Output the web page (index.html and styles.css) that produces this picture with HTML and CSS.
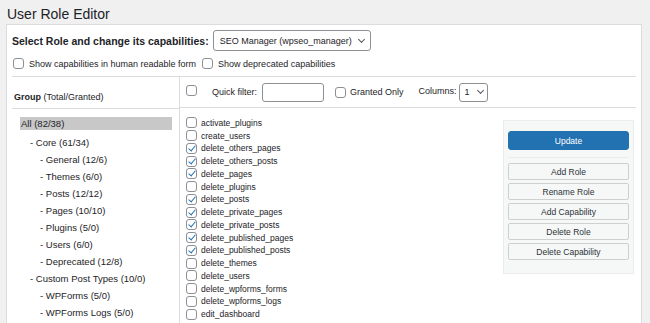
FILE: index.html
```html
<!DOCTYPE html>
<html lang="en">
<head>
    <meta charset="UTF-8">
    <meta name="viewport" content="width=device-width, initial-scale=1.0">
    <title>User Role Editor</title>
    <link rel="stylesheet" href="styles.css">
</head>
<body>
    <h1 class="page-title">User Role Editor</h1>

    <div class="panel">
        <div class="role-row">
            <strong>Select Role and change its capabilities:</strong>
            <div class="select role-select">SEO Manager (wpseo_manager) <span class="chevron"></span></div>
        </div>

        <div class="options-row">
            <label class="opt"><span class="cb"></span>Show capabilities in human readable form</label>
            <label class="opt"><span class="cb"></span>Show deprecated capabilities</label>
        </div>

        <div class="editor">
            <div class="groups">
                <div class="groups-head"><b>Group</b> (Total/Granted)</div>
                <ul class="group-list">
                    <li class="lvl0"><span class="current">All (82/38)</span></li>
                    <li class="lvl1">- Core (61/34)</li>
                    <li class="lvl2">- General (12/6)</li>
                    <li class="lvl2">- Themes (6/0)</li>
                    <li class="lvl2">- Posts (12/12)</li>
                    <li class="lvl2">- Pages (10/10)</li>
                    <li class="lvl2">- Plugins (5/0)</li>
                    <li class="lvl2">- Users (6/0)</li>
                    <li class="lvl2">- Deprecated (12/8)</li>
                    <li class="lvl1">- Custom Post Types (10/0)</li>
                    <li class="lvl2">- WPForms (5/0)</li>
                    <li class="lvl2">- WPForms Logs (5/0)</li>
                </ul>
            </div>

            <div class="caps">
                <div class="caps-toolbar">
                    <span class="cb cb-all"></span>
                    <span class="filter-label">Quick filter:</span>
                    <span class="input"></span>
                    <label class="opt granted"><span class="cb"></span>Granted Only</label>
                    <span class="columns-label">Columns:</span>
                    <div class="select col-select">1 <span class="chevron"></span></div>
                </div>

                <div class="caps-body">
                    <ul class="cap-list">
                        <li><span class="cb"></span>activate_plugins</li>
                        <li><span class="cb"></span>create_users</li>
                        <li><span class="cb checked"></span>delete_others_pages</li>
                        <li><span class="cb checked"></span>delete_others_posts</li>
                        <li><span class="cb checked"></span>delete_pages</li>
                        <li><span class="cb"></span>delete_plugins</li>
                        <li><span class="cb checked"></span>delete_posts</li>
                        <li><span class="cb checked"></span>delete_private_pages</li>
                        <li><span class="cb checked"></span>delete_private_posts</li>
                        <li><span class="cb checked"></span>delete_published_pages</li>
                        <li><span class="cb checked"></span>delete_published_posts</li>
                        <li><span class="cb"></span>delete_themes</li>
                        <li><span class="cb"></span>delete_users</li>
                        <li><span class="cb"></span>delete_wpforms_forms</li>
                        <li><span class="cb"></span>delete_wpforms_logs</li>
                        <li><span class="cb"></span>edit_dashboard</li>
                    </ul>

                    <div class="sidebar">
                        <button class="btn btn-primary">Update</button>
                        <div class="btn-group">
                            <button class="btn">Add Role</button>
                            <button class="btn">Rename Role</button>
                            <button class="btn">Add Capability</button>
                            <button class="btn">Delete Role</button>
                            <button class="btn">Delete Capability</button>
                        </div>
                    </div>
                </div>
            </div>
        </div>
    </div>
</body>
</html>
```

FILE: styles.css
```css
* {
    margin: 0;
    padding: 0;
    box-sizing: border-box;
}

body {
    background-color: #f0f0f1;
    color: #1d2327;
    font-family: 'Liberation Sans', Arial, sans-serif;
    font-size: 9px;
    overflow: hidden;
}

.page-title {
    font-size: 14px;
    font-weight: 400;
    line-height: 18px;
    padding: 5px 0 0 7px;
    height: 24px;
}

.panel {
    margin-left: 6px;
    width: 636px;
    height: 320px;
    background-color: white;
    border: 1px solid #dcdcde;
    padding: 0 5px;
}

/* role selector */
.role-row {
    display: flex;
    align-items: center;
    gap: 4px;
    height: 21px;
    margin-top: 5px;
}

.role-row strong {
    font-size: 10.5px;
}

.select {
    display: flex;
    align-items: center;
    height: 21px;
    border: 1px solid #8c8f94;
    border-radius: 3px;
    font-size: 9px;
    white-space: nowrap;
    padding: 0 6px;
    gap: 4px;
}

.role-select {
    width: 158px;
}

.chevron {
    flex: none;
    width: 5px;
    height: 5px;
    border-right: 1px solid #50575e;
    border-bottom: 1px solid #50575e;
    transform: rotate(45deg);
    margin-top: -3px;
    margin-left: auto;
}

.options-row {
    display: flex;
    align-items: center;
    gap: 6px;
    height: 26px;
    padding-left: 1px;
    border-bottom: 1px solid #dcdcde;
}

.opt {
    display: flex;
    align-items: center;
    gap: 5px;
}

.cb {
    display: inline-block;
    flex: none;
    position: relative;
    width: 11px;
    height: 11px;
    border: 1px solid #8c8f94;
    border-radius: 3px;
    background-color: white;
}

.cb.checked::after {
    content: '';
    position: absolute;
    left: 3px;
    top: 0px;
    width: 3px;
    height: 6px;
    border-right: 1.5px solid #2271b1;
    border-bottom: 1.5px solid #2271b1;
    transform: rotate(40deg);
}

/* editor */
.editor {
    display: grid;
    grid-template-columns: 168px 1fr;
    height: 260px;
}

.groups {
    border-right: 1px solid #dcdcde;
}

.groups-head {
    height: 32px;
    padding: 15px 0 0 2px;
    border-bottom: 1px solid #dcdcde;
}

.group-list {
    list-style: none;
    padding-top: 6px;
    font-size: 9.5px;
}

.group-list li {
    height: 17px;
    line-height: 17px;
}

.lvl0 {
    padding-left: 8px;
}

.lvl1 {
    padding-left: 18px;
}

.lvl2 {
    padding-left: 28px;
}

.current {
    display: block;
    width: 152px;
    margin-top: 2px;
    line-height: 13px;
    padding-left: 1px;
    background-color: #c8c8c8;
}

.caps-toolbar {
    display: flex;
    align-items: center;
    height: 31px;
    padding-left: 6px;
    border-bottom: 1px solid #dcdcde;
}

.cb-all {
    align-self: flex-start;
    margin-top: 8px;
}

.filter-label {
    margin-left: 15px;
}

.input {
    width: 62px;
    height: 19px;
    border: 1px solid #8c8f94;
    border-radius: 3px;
    margin-left: 5px;
}

.granted {
    margin-left: 11px;
    gap: 4px;
}

.columns-label {
    margin-left: 15px;
    margin-top: -2px;
}

.col-select {
    width: 29px;
    height: 19px;
    margin-left: 2px;
    padding: 0 4px 0 5px;
    gap: 3px;
}

.caps-body {
    display: flex;
    align-items: flex-start;
}

.cap-list {
    flex: 1;
    list-style: none;
    padding: 8.5px 0 0 6px;
    font-size: 8.5px;
}

.cap-list li {
    display: flex;
    align-items: center;
    gap: 4px;
    height: 12.75px;
}

.sidebar {
    width: 131px;
    margin: 12px 2px 0 0;
    padding: 10px 4px 13px;
    background-color: #f6f7f7;
    border: 1px solid #ececec;
}

.btn {
    display: block;
    width: 100%;
    height: 17px;
    font-family: 'Liberation Sans', Arial, sans-serif;
    font-size: 8.5px;
    color: #2c3338;
    background-color: #f6f7f7;
    border: 1px solid #cfcfcf;
    border-radius: 2px;
    cursor: pointer;
}

.btn-primary {
    height: 19px;
    background-color: #2271b1;
    border-color: #2271b1;
    border-radius: 3px;
    color: white;
}

.btn-group {
    margin-top: 7px;
    padding-top: 5px;
    border-top: 1px solid #ececec;
    display: flex;
    flex-direction: column;
    gap: 3px;
}
```
